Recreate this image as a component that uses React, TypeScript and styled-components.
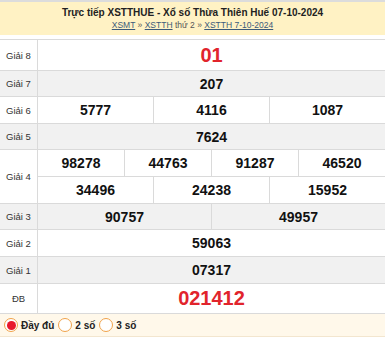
import styled, { createGlobalStyle } from 'styled-components'

const GlobalStyle = createGlobalStyle`
  body {
    margin: 0;
    background: #fff;
    font-family: "Liberation Sans", Arial, sans-serif;
  }
`

const Header = styled.div`
  border-top: 2px solid #dcdcdc;
  background: #fff2c4;
  height: 33px;
  display: flex;
  flex-direction: column;
  align-items: center;
  justify-content: center;
  margin-bottom: 4px;
`

const Title = styled.h2`
  margin: 0 0 1px;
  font-size: 10px;
  line-height: 12px;
  font-weight: bold;
  color: #222;
`

const Crumbs = styled.div`
  font-size: 8.5px;
  line-height: 10px;
  color: #555;

  a {
    color: #3b5a7a;
    text-decoration: underline;
  }
`

const Table = styled.div`
  border-top: 1px solid #dadada;
`

const Row = styled.div<{ $h: number; $alt?: boolean }>`
  display: flex;
  height: ${({ $h }) => $h}px;
  border-bottom: 1px solid #dadada;
  background: ${({ $alt }) => ($alt ? '#f1f1f1' : '#fff')};
`

const BigRow = styled.div`
  display: flex;
  border-bottom: 1px solid #dadada;
`

const Label = styled.div`
  width: 37px;
  flex: none;
  border-right: 1px solid #dadada;
  display: flex;
  align-items: center;
  justify-content: center;
  font-size: 9.5px;
  color: #333;
`

const Cells = styled.div`
  flex: 1;
  display: flex;
`

const SubRows = styled.div`
  flex: 1;
  display: flex;
  flex-direction: column;
`

const SubRow = styled.div<{ $h: number; $last?: boolean }>`
  display: flex;
  height: ${({ $h }) => $h}px;
  border-bottom: ${({ $last }) => ($last ? 'none' : '1px solid #dadada')};
`

const Cell = styled.div<{ $big?: boolean }>`
  flex: 1;
  display: flex;
  align-items: center;
  justify-content: center;
  font-weight: bold;
  font-size: ${({ $big }) => ($big ? '20px' : '14px')};
  color: ${({ $big }) => ($big ? '#e1242c' : '#111')};

  & + & {
    border-left: 1px solid #dadada;
  }
`

const Footer = styled.div`
  background: #fff8ea;
  height: 22px;
  border-bottom: 1px solid #f3e6cf;
  display: flex;
  align-items: center;
  padding-left: 4px;
  gap: 4px;
`

const Option = styled.label`
  display: flex;
  align-items: center;
  gap: 3px;
  font-size: 10px;
  font-weight: bold;
  color: #222;
`

const Radio = styled.span<{ $on?: boolean }>`
  width: 12px;
  height: 12px;
  border-radius: 50%;
  border: 1px solid #f0a24a;
  background: #fff;
  display: flex;
  align-items: center;
  justify-content: center;

  &::after {
    content: '';
    width: 9px;
    height: 9px;
    border-radius: 50%;
    background: ${({ $on }) => ($on ? '#e8192c' : 'transparent')};
  }
`

type Prize = {
  label: string
  nums: string[]
  h: number
  alt?: boolean
  big?: boolean
}

const prizes: Prize[] = [
  { label: 'Giải 8', nums: ['01'], h: 30, big: true },
  { label: 'Giải 7', nums: ['207'], h: 25, alt: true },
  { label: 'Giải 6', nums: ['5777', '4116', '1087'], h: 26 },
  { label: 'Giải 5', nums: ['7624'], h: 25, alt: true },
]

const after: Prize[] = [
  { label: 'Giải 3', nums: ['90757', '49957'], h: 25, alt: true },
  { label: 'Giải 2', nums: ['59063'], h: 26 },
  { label: 'Giải 1', nums: ['07317'], h: 26, alt: true },
  { label: 'ĐB', nums: ['021412'], h: 29, big: true },
]

function PrizeRow({ p }: { p: Prize }) {
  return (
    <Row $h={p.h} $alt={p.alt}>
      <Label>{p.label}</Label>
      <Cells>
        {p.nums.map((n) => (
          <Cell key={n} $big={p.big}>{n}</Cell>
        ))}
      </Cells>
    </Row>
  )
}

export default function App() {
  return (
    <>
      <GlobalStyle />
      <Header>
        <Title>Trực tiếp XSTTHUE - Xổ số Thừa Thiên Huế 07-10-2024</Title>
        <Crumbs>
          <a href="#">XSMT</a> » <a href="#">XSTTH</a> thứ 2 » <a href="#">XSTTH 7-10-2024</a>
        </Crumbs>
      </Header>

      <Table>
        {prizes.map((p) => (
          <PrizeRow key={p.label} p={p} />
        ))}

        <BigRow>
          <Label>Giải 4</Label>
          <SubRows>
            <SubRow $h={26}>
              {['98278', '44763', '91287', '46520'].map((n) => (
                <Cell key={n}>{n}</Cell>
              ))}
            </SubRow>
            <SubRow $h={26} $last>
              {['34496', '24238', '15952'].map((n) => (
                <Cell key={n}>{n}</Cell>
              ))}
            </SubRow>
          </SubRows>
        </BigRow>

        {after.map((p) => (
          <PrizeRow key={p.label} p={p} />
        ))}
      </Table>

      <Footer>
        <Option><Radio $on />Đầy đủ</Option>
        <Option><Radio />2 số</Option>
        <Option><Radio />3 số</Option>
      </Footer>
    </>
  )
}
